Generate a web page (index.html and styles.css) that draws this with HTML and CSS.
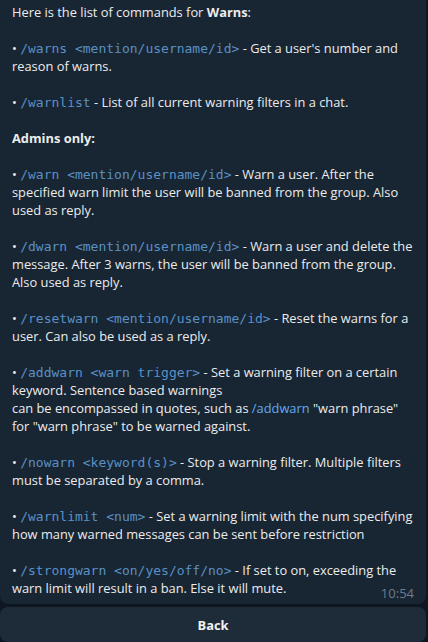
FILE: index.html
```html
<!DOCTYPE html>
<html>
<head>
<meta charset="utf-8">
<link rel="stylesheet" href="styles.css">
</head>
<body>
<div class="chat">
  <div class="bubble">
    <p>Here is the list of commands for <b>Warns</b>:</p>
    <p>• <code>/warns &lt;mention/username/id&gt;</code> - Get a user's number and reason of warns.</p>
    <p>• <code>/warnlist</code> - List of all current warning filters in a chat.</p>
    <p><b>Admins only:</b></p>
    <p>• <code>/warn &lt;mention/username/id&gt;</code> - Warn a user. After the specified warn limit the user will be banned from the group. Also used as reply.</p>
    <p>• <code>/dwarn &lt;mention/username/id&gt;</code> - Warn a user and delete the message. After 3 warns, the user will be banned from the group. Also used as reply.</p>
    <p>• <code>/resetwarn &lt;mention/username/id&gt;</code> - Reset the warns for a user. Can also be used as a reply.</p>
    <p>• <code>/addwarn &lt;warn trigger&gt;</code> - Set a warning filter on a certain keyword. Sentence based warnings<br>can be encompassed in quotes, such as <span class="link">/addwarn</span> "warn phrase" for "warn phrase" to be warned against.</p>
    <p>• <code>/nowarn &lt;keyword(s)&gt;</code> - Stop a warning filter. Multiple filters must be separated by a comma.</p>
    <p>• <code>/warnlimit &lt;num&gt;</code> - Set a warning limit with the num specifying how many warned messages can be sent before restriction</p>
    <p>• <code>/strongwarn &lt;on/yes/off/no&gt;</code> - If set to on, exceeding the warn limit will result in a ban. Else it will mute.</p>
    <span class="time">10:54</span>
  </div>
  <div class="button">Back</div>
</div>
</body>
</html>
```

FILE: styles.css
```css
html, body {
  margin: 0;
  padding: 0;
  background: #0e1621;
  width: 428px;
  height: 642px;
  overflow: hidden;
}
.chat {
  display: flex;
  flex-direction: column;
  gap: 3px;
  width: 426px;
  font-family: "Open Sans", "Noto Sans", sans-serif;
  font-size: 12.85px;
  line-height: 18px;
  color: #ececec;
}
.bubble {
  position: relative;
  background: #182533;
  padding: 3px 10px 7px 12px;
  border-radius: 0 0 8px 8px;
}
.bubble p {
  margin: 0 0 18px 0;
}
.bubble p:last-of-type {
  margin-bottom: 0;
}
b {
  font-weight: 700;
}
code {
  font-family: "DejaVu Sans Mono", "Liberation Mono", monospace;
  font-size: 13px;
  line-height: 1;
  color: #5a91c5;
}
.link {
  color: #62aaf0;
}
.time {
  position: absolute;
  right: 12px;
  bottom: 2px;
  font-size: 13px;
  line-height: 18px;
  color: #6c7d8e;
}
.button {
  height: 35px;
  display: flex;
  align-items: center;
  justify-content: center;
  background: #1e2c3a;
  border-radius: 8px;
  font-weight: 700;
  color: #f2f2f2;
}
```
